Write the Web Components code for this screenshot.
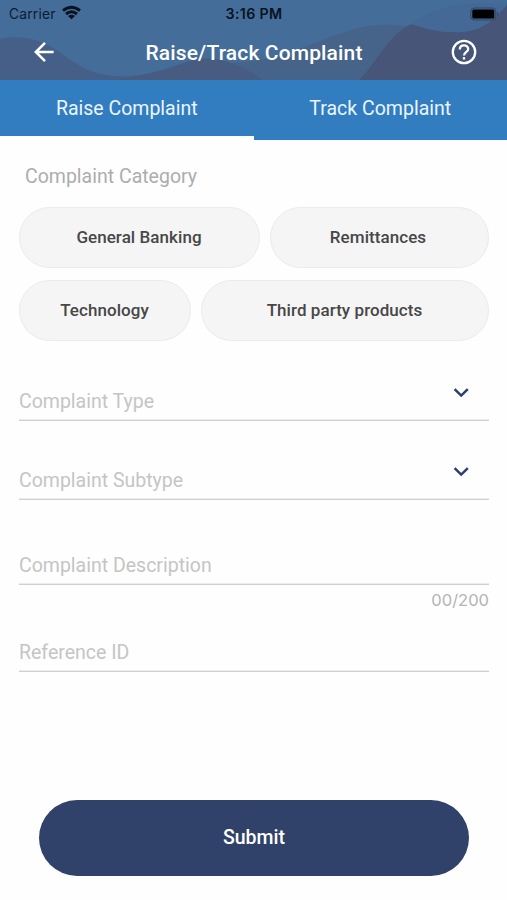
<!DOCTYPE html>
<html lang="en">
<head>
<meta charset="utf-8">
<title>Raise/Track Complaint</title>
<style>
html,body{margin:0;padding:0;background:#fefefe}
body{font-family:Roboto,sans-serif;width:507px;height:900px;overflow:hidden}
</style>
</head>
<body>
<complaint-screen></complaint-screen>
<script>
const define = (name, html) => customElements.define(name, class extends HTMLElement {
  constructor() {
    super();
    const t = document.createElement('template');
    t.innerHTML = html;
    this.attachShadow({ mode: 'open' }).appendChild(t.content.cloneNode(true));
  }
});

define('status-bar', `
<style>
:host{display:grid;grid-template-columns:1fr auto 1fr;align-items:center;height:27px;padding:0 8px 0 9px;box-sizing:border-box;font-family:Inter,sans-serif;color:#0b1c30}
.left{display:flex;align-items:center;gap:6px;font-size:13.8px;letter-spacing:.2px}
.time{font-size:14.2px;font-weight:600;letter-spacing:.35px;color:#08131f}
svg{display:block}
.wifi{margin-top:-2px}
.battery{justify-self:end}
</style>
<div class="left"><span>Carrier</span>
<svg class="wifi" width="19" height="15" viewBox="0 0 19 15" fill="none" stroke="#08131f" stroke-width="2.9"><path d="M1 5.6Q9.5-1.2 18 5.6"/><path d="M4 9Q9.5 4.6 15 9"/><path d="M9.5 14.2 6 10.9Q9.5 8.4 13 10.9Z" fill="#08131f" stroke="none"/></svg></div>
<span class="time">3:16 PM</span>
<svg class="battery" width="29" height="14" viewBox="0 0 29 14"><rect x=".8" y="1" width="25" height="12" rx="3.5" fill="none" stroke="#2c4866" stroke-width="1"/><rect x="2.3" y="2.5" width="22" height="9" rx="1.6" fill="#000"/><path d="M27.2 4.8Q29.4 7 27.2 9.2Z" fill="#2c4866"/></svg>
`);

define('nav-bar', `
<style>
:host{display:grid;grid-template-columns:34px 1fr 34px;align-items:center;height:53px;padding:0 26px 3px 27px;box-sizing:border-box;color:#fff}
.title{text-align:center;font-size:21px;font-weight:500;letter-spacing:.14px;padding-top:1px}
svg{display:block;justify-self:center}
</style>
<svg width="22" height="22" viewBox="0 0 22 22" fill="none" stroke="#fff" stroke-width="2.5"><path d="M20.6 11H2.8M12 1.8 2.8 11l9.2 9.2"/></svg>
<span class="title"><slot></slot></span>
<svg width="28" height="28" viewBox="0 0 28 28" fill="none" stroke="#fff" stroke-width="2.3"><circle cx="14" cy="14" r="11.2"/><path d="M9.8 11.4C9.8 8.6 11.7 7.3 14 7.3S18.2 8.8 18.2 11.2C18.2 14 14 13.8 14 17.6"/><path d="M14 19.1v2.5"/></svg>
`);

define('app-header', `
<style>
:host{display:block;height:80px}
.wrap{display:grid;height:80px}
.wrap>*{grid-area:1/1}
svg{display:block}
</style>
<div class="wrap">
<svg width="507" height="80" viewBox="0 0 507 80">
<rect width="507" height="80" fill="#446d9a"/>
<path d="M119 76C160 76 200 64 245 62C290 58 326 35 362 27C396 20 424 31 455 32C480 31 495 18 507 5V80H119Z" fill="#466489"/>
<path d="M0 39C22 34 42 40 58 51C76 64 92 76 119 76V80H0Z" fill="#465f88"/>
<path d="M119 78C152 75 172 67 192 60C222 54 246 68 263 80H119Z" fill="#475c80"/>
<path d="M359 80C376 64 387 36 411 24C430 30 443 33 462 32C484 30 496 17 507 5V80Z" fill="#465578"/>
<path d="M411 24C430 10 458 0 507 4C495 19 484 30 462 32C443 33 430 30 411 24Z" fill="#446997"/>
</svg>
<div><status-bar></status-bar><nav-bar><slot></slot></nav-bar></div>
</div>
`);

define('tab-item', `
<style>
:host{display:flex;flex:1;align-items:center;justify-content:center;height:60px;padding-bottom:4px;box-sizing:border-box;background:#327dbf;color:#ebf5ff;font-size:19.5px;border-bottom:0 solid #fff}
:host([selected]){border-bottom-width:4px;padding-bottom:0}
</style><slot></slot>
`);

define('tab-strip', `<style>:host{display:flex;height:60px}</style><slot></slot>`);

define('category-chip', `
<style>
:host{display:flex;align-items:center;justify-content:center;height:61px;padding:0 3px 2px 0;box-sizing:border-box;border:1px solid #ebebeb;border-radius:31px;background:#f5f5f5;color:#474747;font-size:17px;font-weight:500;letter-spacing:.06px}
</style><slot></slot>
`);

define('chip-row', `<style>:host{display:grid;grid-template-columns:var(--cols);gap:10px}</style><slot></slot>`);

define('form-field', `
<style>
:host{display:flex;justify-content:space-between;align-items:flex-end;box-sizing:border-box;border-bottom:1px solid #d0d0d0;box-shadow:inset 0 -1px #ececec;color:#c5c5c5;font-size:19.5px;line-height:24px;padding-bottom:6px}
svg{display:none;margin:0 19px 16px 0}
:host([select]) svg{display:block}
</style>
<span><slot></slot></span>
<svg width="17" height="11" viewBox="0 0 17 11" fill="none" stroke="#2c3e70" stroke-width="2.5"><path d="M1.6 2.2 8.2 8.6l6.6-6.4"/></svg>
`);

define('char-counter', `<style>:host{display:block;text-align:right;font-family:Inter,sans-serif;font-size:16.5px;line-height:20px;color:#b4b4b4}</style><slot></slot>`);

define('submit-button', `
<style>
:host{display:block}
button{display:block;width:100%;height:76px;padding:0 0 2px;border:0;border-radius:38px;background:#304269;color:#fff;font:500 19.5px Roboto,sans-serif}
</style><button><slot></slot></button>
`);

define('complaint-screen', `
<style>
:host{display:block;width:507px;height:900px}
main{display:flex;flex-direction:column;padding:0 18px 0 19px}
h2{margin:25px 0 18px 6px;font-size:19.5px;line-height:24px;font-weight:400;color:#adadad}
.r1{--cols:241px 219px}
.r2{--cols:172px 288px;margin-top:12px}
.r2 category-chip,.r1 category-chip:first-child{padding-right:1px}
.type{height:80px}
.sub{height:79px}
.desc{height:85px}
.ref{height:62px}
char-counter{margin-top:5px}
submit-button{margin:128px 20px 0}
</style>
<app-header>Raise/Track Complaint</app-header>
<tab-strip><tab-item selected>Raise Complaint</tab-item><tab-item>Track Complaint</tab-item></tab-strip>
<main>
<h2>Complaint Category</h2>
<chip-row class="r1"><category-chip>General Banking</category-chip><category-chip>Remittances</category-chip></chip-row>
<chip-row class="r2"><category-chip>Technology</category-chip><category-chip>Third party products</category-chip></chip-row>
<form-field class="type" select>Complaint Type</form-field>
<form-field class="sub" select>Complaint Subtype</form-field>
<form-field class="desc">Complaint Description</form-field>
<char-counter>00/200</char-counter>
<form-field class="ref">Reference ID</form-field>
<submit-button>Submit</submit-button>
</main>
`);
</script>
</body>
</html>
